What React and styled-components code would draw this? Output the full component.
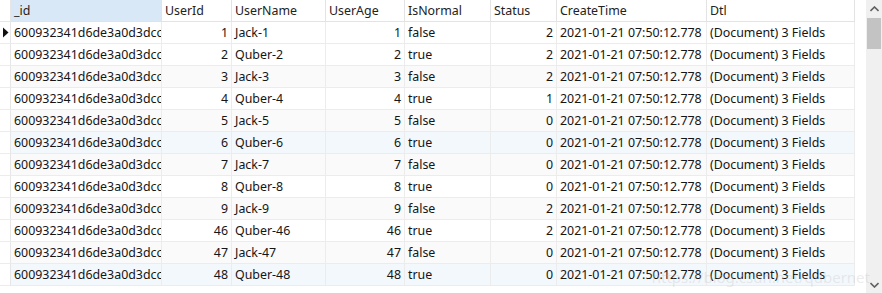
import React from "react";
import styled, { createGlobalStyle } from "styled-components";

const Global = createGlobalStyle`
  html, body { margin: 0; padding: 0; background: #fff; }
  body { font-family: "Noto Sans", "Liberation Sans", sans-serif; }
`;

const COLS = [
  { key: "id", title: "_id", w: 151, align: "left" },
  { key: "uid", title: "UserId", w: 70, align: "right" },
  { key: "name", title: "UserName", w: 94, align: "left" },
  { key: "age", title: "UserAge", w: 79, align: "right" },
  { key: "norm", title: "IsNormal", w: 86, align: "left" },
  { key: "status", title: "Status", w: 66, align: "right" },
  { key: "time", title: "CreateTime", w: 150, align: "left" },
  { key: "dtl", title: "Dtl", w: 148, align: "left" },
];

const raw = [
  [1, "Jack-1", 1, "false", 2],
  [2, "Quber-2", 2, "true", 2],
  [3, "Jack-3", 3, "false", 2],
  [4, "Quber-4", 4, "true", 1],
  [5, "Jack-5", 5, "false", 0],
  [6, "Quber-6", 6, "true", 0],
  [7, "Jack-7", 7, "false", 0],
  [8, "Quber-8", 8, "true", 0],
  [9, "Jack-9", 9, "false", 2],
  [46, "Quber-46", 46, "true", 2],
  [47, "Jack-47", 47, "false", 0],
  [48, "Quber-48", 48, "true", 0],
];

const rows = raw.map(([uid, name, age, norm, status]) => ({
  id: "600932341d6de3a0d3dcc",
  uid, name, age, norm, status,
  time: "2021-01-21 07:50:12.778",
  dtl: "(Document) 3 Fields",
}));

const Frame = styled.div`
  position: relative;
  width: 882px;
  height: 293px;
  display: flex;
  overflow: hidden;
  background: #fff;
`;

const Grid = styled.div`
  flex: 1;
  display: flex;
  flex-direction: column;
`;

const Row = styled.div`
  display: flex;
  height: 22px;
  background: ${(p) => p.$bg || "#fff"};
`;

const Indicator = styled.div`
  width: 11px;
  flex: none;
  border-right: 1px solid #e6e6e6;
  border-bottom: 1px solid ${(p) => (p.$head ? "#e6e6e6" : "#ececec")};
  box-sizing: border-box;
  display: flex;
  align-items: center;
  justify-content: center;
  background: #fff;
`;

const Cell = styled.div`
  width: ${(p) => p.$w}px;
  flex: none;
  box-sizing: border-box;
  border-right: 1px solid #ececec;
  border-bottom: 1px solid #ececec;
  padding: 0 3px;
  font-size: 12.4px;
  color: #151515;
  line-height: 21px;
  white-space: nowrap;
  overflow: hidden;
  text-align: ${(p) => p.$align};
`;

const HeadCell = styled(Cell)`
  background: ${(p) => (p.$active ? "#d9e8f7" : "#fff")};
  border-bottom: 1px solid #e3e3e3;
  border-right: 1px solid #e3e3e3;
  text-align: left;
  color: #222;
`;

const Gap = styled.div`
  width: 11px;
  flex: none;
`;

const Scrollbar = styled.div`
  width: 16px;
  flex: none;
  background: #f0f0f0;
  display: flex;
  flex-direction: column;
  align-items: center;
`;

const ArrowBtn = styled.div`
  height: 17px;
  width: 16px;
  display: flex;
  align-items: center;
  justify-content: center;
`;

const Track = styled.div`
  flex: 1;
  width: 100%;
  display: flex;
  flex-direction: column;
  align-items: center;
`;

const Thumb = styled.div`
  margin-top: 1px;
  width: 14px;
  height: 31px;
  background: #c3c3c3;
`;

const Watermark = styled.div`
  position: absolute;
  right: 12px;
  bottom: 6px;
  font-size: 15px;
  color: rgba(190, 190, 190, 0.3);
  font-family: "Noto Sans", sans-serif;
  pointer-events: none;
`;

const rowBg = (i) => {
  if (i === 5 || i === 11) return "#f3f8fd";
  if (i % 2 === 0 && i !== 0) return "#fafafa";
  return "#fff";
};

export default function App() {
  return (
    <>
      <Global />
      <Frame>
        <Grid>
          <Row>
            <Indicator $head />
            {COLS.map((c, i) => (
              <HeadCell key={c.key} $w={c.w} $align="left" $active={i === 0}>
                {c.title}
              </HeadCell>
            ))}
          </Row>
          {rows.map((r, i) => (
            <Row key={i} $bg={rowBg(i)}>
              <Indicator>
                {i === 0 && (
                  <svg width="7" height="11" viewBox="0 0 7 11">
                    <path d="M1 0.5 L6.5 5.5 L1 10.5 Z" fill="#111" />
                  </svg>
                )}
              </Indicator>
              {COLS.map((c) => (
                <Cell key={c.key} $w={c.w} $align={c.align}>
                  {r[c.key]}
                </Cell>
              ))}
            </Row>
          ))}
        </Grid>
        <Gap />
        <Scrollbar>
          <ArrowBtn>
            <svg width="9" height="6" viewBox="0 0 9 6">
              <path d="M0.5 5 L4.5 1 L8.5 5" stroke="#606060" strokeWidth="1.6" fill="none" />
            </svg>
          </ArrowBtn>
          <Track>
            <Thumb />
          </Track>
          <ArrowBtn>
            <svg width="9" height="6" viewBox="0 0 9 6">
              <path d="M0.5 1 L4.5 5 L8.5 1" stroke="#606060" strokeWidth="1.6" fill="none" />
            </svg>
          </ArrowBtn>
        </Scrollbar>
        <Watermark>https://blog.csdn.net/qubernet</Watermark>
      </Frame>
    </>
  );
}
